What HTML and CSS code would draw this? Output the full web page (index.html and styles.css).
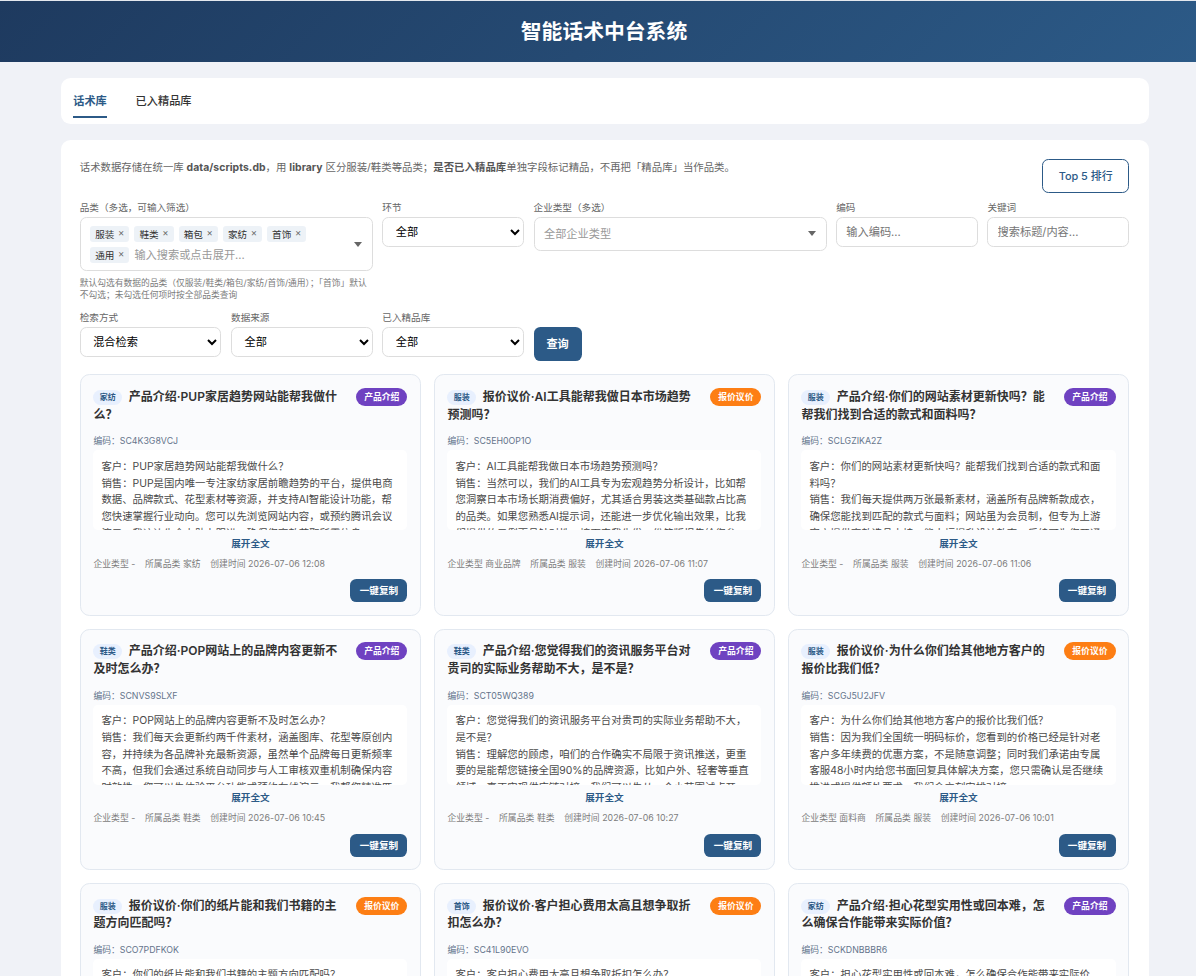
FILE: index.html
```html
<!DOCTYPE html>
<html lang="zh-CN">
<head>
<meta charset="utf-8">
<title>智能话术中台系统</title>
<link rel="stylesheet" href="styles.css">
</head>
<body>
<header class="header"><h1>智能话术中台系统</h1></header>
<main class="container">
  <nav class="tabs">
    <a class="tab active">话术库</a>
    <a class="tab">已入精品库</a>
  </nav>
  <section class="panel">
    <div class="panel-head">
      <p class="desc">话术数据存储在统一库 <strong>data/scripts.db</strong>，用 <strong>library</strong> 区分服装/鞋类等品类；<strong>是否已入精品库</strong>单独字段标记精品，不再把「精品库」当作品类。</p>
      <button class="btn-outline">Top 5 排行</button>
    </div>
    <div class="filters">
      <div class="field wide">
        <label>品类（多选，可输入筛选）</label>
        <div class="multi tall">
          <div class="chips">
            <span class="chip">服装<i>×</i></span><span class="chip">鞋类<i>×</i></span><span class="chip">箱包<i>×</i></span><span class="chip">家纺<i>×</i></span><span class="chip">首饰<i>×</i></span><span class="chip">通用<i>×</i></span><span class="ph">输入搜索或点击展开...</span>
          </div>
          <span class="caret"></span>
        </div>
        <p class="hint">默认勾选有数据的品类（仅服装/鞋类/箱包/家纺/首饰/通用）；「首饰」默认<br>不勾选；未勾选任何项时按全部品类查询</p>
      </div>
      <div class="field"><label>环节</label><select><option>全部</option></select></div>
      <div class="field wide">
        <label>企业类型（多选）</label>
        <div class="multi"><span class="ph">全部企业类型</span><span class="caret"></span></div>
      </div>
      <div class="field"><label>编码</label><input type="text" placeholder="输入编码..."></div>
      <div class="field"><label>关键词</label><input type="text" placeholder="搜索标题/内容..."></div>
      <div class="field"><label>检索方式</label><select><option>混合检索</option></select></div>
      <div class="field"><label>数据来源</label><select><option>全部</option></select></div>
      <div class="field"><label>已入精品库</label><select><option>全部</option></select></div>
      <div class="field submit"><button class="btn-query">查询</button></div>
    </div>

    <div class="cards">
      <article class="card">
        <div class="card-head"><h3><span class="tag">家纺</span>产品介绍·PUP家居趋势网站能帮我做什<br>么？</h3><span class="badge purple">产品介绍</span></div>
        <div class="code">编码：SC4K3G8VCJ</div>
        <div class="content">客户：PUP家居趋势网站能帮我做什么？<br>销售：PUP是国内唯一专注家纺家居前瞻趋势的平台，提供电商<br>数据、品牌款式、花型素材等资源，并支持AI智能设计功能，帮<br>您快速掌握行业动向。您可以先浏览网站内容，或预约腾讯会议<br>演示，我这边先全力助力跟进，确保您高效获取所需信息。</div>
        <a class="expand">展开全文</a>
        <div class="meta"><span>企业类型 -</span><span>所属品类 家纺</span><span>创建时间 2026-07-06 12:08</span></div>
        <button class="copy">一键复制</button>
      </article>
      <article class="card">
        <div class="card-head"><h3><span class="tag">服装</span>报价议价·AI工具能帮我做日本市场趋势<br>预测吗？</h3><span class="badge orange">报价议价</span></div>
        <div class="code">编码：SC5EH0OP1O</div>
        <div class="content">客户：AI工具能帮我做日本市场趋势预测吗？<br>销售：当然可以，我们的AI工具专为宏观趋势分析设计，比如帮<br>您洞察日本市场长期消费偏好，尤其适合男装这类基础款占比高<br>的品类。如果您熟悉AI提示词，还能进一步优化输出效果，比我<br>们提供的示例更具针对性。接下来我先发一份简版报告给您参</div>
        <a class="expand">展开全文</a>
        <div class="meta"><span>企业类型 商业品牌</span><span>所属品类 服装</span><span>创建时间 2026-07-06 11:07</span></div>
        <button class="copy">一键复制</button>
      </article>
      <article class="card">
        <div class="card-head"><h3><span class="tag">服装</span>产品介绍·你们的网站素材更新快吗？能<br>帮我们找到合适的款式和面料吗？</h3><span class="badge purple">产品介绍</span></div>
        <div class="code">编码：SCLGZIKA2Z</div>
        <div class="content">客户：你们的网站素材更新快吗？能帮我们找到合适的款式和面<br>料吗？<br>销售：我们每天提供两万张最新素材，涵盖所有品牌新款成衣，<br>确保您能找到匹配的款式与面料；网站虽为会员制，但专为上游<br>客户提供高效选品支持，能大幅提升设计效率。后续可为您开通</div>
        <a class="expand">展开全文</a>
        <div class="meta"><span>企业类型 -</span><span>所属品类 服装</span><span>创建时间 2026-07-06 11:06</span></div>
        <button class="copy">一键复制</button>
      </article>
      <article class="card">
        <div class="card-head"><h3><span class="tag">鞋类</span>产品介绍·POP网站上的品牌内容更新不<br>及时怎么办？</h3><span class="badge purple">产品介绍</span></div>
        <div class="code">编码：SCNVS9SLXF</div>
        <div class="content">客户：POP网站上的品牌内容更新不及时怎么办？<br>销售：我们每天会更新约两千件素材，涵盖图库、花型等原创内<br>容，并持续为各品牌补充最新资源，虽然单个品牌每日更新频率<br>不高，但我们会通过系统自动同步与人工审核双重机制确保内容<br>时效性。您可以先体验平台功能或预约在线演示，我帮您精准匹</div>
        <a class="expand">展开全文</a>
        <div class="meta"><span>企业类型 -</span><span>所属品类 鞋类</span><span>创建时间 2026-07-06 10:45</span></div>
        <button class="copy">一键复制</button>
      </article>
      <article class="card">
        <div class="card-head"><h3><span class="tag">鞋类</span>产品介绍·您觉得我们的资讯服务平台对<br>贵司的实际业务帮助不大，是不是？</h3><span class="badge purple">产品介绍</span></div>
        <div class="code">编码：SCT05WQ389</div>
        <div class="content">客户：您觉得我们的资讯服务平台对贵司的实际业务帮助不大，<br>是不是？<br>销售：理解您的顾虑，咱们的合作确实不局限于资讯推送，更重<br>要的是能帮您链接全国90%的品牌资源，比如户外、轻奢等垂直<br>领域，真正实现供应链对接。我们可以先从一个小范围试点开</div>
        <a class="expand">展开全文</a>
        <div class="meta"><span>企业类型 -</span><span>所属品类 鞋类</span><span>创建时间 2026-07-06 10:27</span></div>
        <button class="copy">一键复制</button>
      </article>
      <article class="card">
        <div class="card-head"><h3><span class="tag">服装</span>报价议价·为什么你们给其他地方客户的<br>报价比我们低？</h3><span class="badge orange">报价议价</span></div>
        <div class="code">编码：SCGJ5U2JFV</div>
        <div class="content">客户：为什么你们给其他地方客户的报价比我们低？<br>销售：因为我们全国统一明码标价，您看到的价格已经是针对老<br>客户多年续费的优惠方案，不是随意调整；同时我们承诺由专属<br>客服48小时内给您书面回复具体解决方案，您只需确认是否继续<br>推进或提供额外要求，我们会立刻安排对接。</div>
        <a class="expand">展开全文</a>
        <div class="meta"><span>企业类型 面料商</span><span>所属品类 服装</span><span>创建时间 2026-07-06 10:01</span></div>
        <button class="copy">一键复制</button>
      </article>
      <article class="card">
        <div class="card-head"><h3><span class="tag">服装</span>报价议价·你们的纸片能和我们书籍的主<br>题方向匹配吗？</h3><span class="badge orange">报价议价</span></div>
        <div class="code">编码：SCO7PDFKOK</div>
        <div class="content">客户：你们的纸片能和我们书籍的主题方向匹配吗？</div>
      </article>
      <article class="card">
        <div class="card-head"><h3><span class="tag">首饰</span>报价议价·客户担心费用太高且想争取折<br>扣怎么办？</h3><span class="badge orange">报价议价</span></div>
        <div class="code">编码：SC41L90EVO</div>
        <div class="content">客户：客户担心费用太高且想争取折扣怎么办？</div>
      </article>
      <article class="card">
        <div class="card-head"><h3><span class="tag">家纺</span>产品介绍·担心花型实用性或回本难，怎<br>么确保合作能带来实际价值？</h3><span class="badge purple">产品介绍</span></div>
        <div class="code">编码：SCKDNBBBR6</div>
        <div class="content">客户：担心花型实用性或回本难，怎么确保合作能带来实际价</div>
      </article>
    </div>
  </section>
</main>
</body>
</html>
```

FILE: styles.css
```css
* { box-sizing: border-box; margin: 0; padding: 0; }
html { height: 976px; overflow: hidden; }
body {
  height: 976px;
  overflow: hidden;
  background: #f0f2f7;
  color: #333;
  font-family: Inter, "Noto Sans CJK SC", sans-serif;
  white-space: nowrap;
}
button, input, select { font-family: inherit; }

.header {
  height: 62px;
  padding: 1px 0 0 12px;
  display: flex;
  align-items: center;
  justify-content: center;
  background: linear-gradient(135deg, #1e3a5f, #2c5a87) padding-box;
  border-top: 1px solid #e4e8ee;
}
.header h1 { font-size: 20.8px; line-height: 30px; font-weight: 700; color: #fff; }

.container { width: 1088px; margin: 16px 0 0 60.6px; }

.tabs {
  display: flex;
  gap: 28.8px;
  height: 46px;
  padding: 6.4px 12.6px;
  background: #fff;
  border-radius: 9.6px;
}
.tab {
  height: 33.6px;
  line-height: 34.6px;
  font-size: 11.2px;
  font-weight: 500;
  color: #333;
  border-bottom: 2px solid transparent;
}
.tab.active { color: #2c5a87; border-bottom-color: #2c5a87; font-weight: 600; }

.panel {
  height: 836px;
  margin-top: 16px;
  padding: 19.2px 19.5px 0 19.2px;
  background: #fff;
  border-radius: 9.6px 9.6px 0 0;
  overflow: hidden;
}
.panel-head { display: flex; justify-content: space-between; height: 41.4px; }
.desc { padding-top: 1px; font-size: 10.4px; line-height: 16.6px; color: #666; }
.desc strong { color: #555; letter-spacing: 0.05px; }
.btn-outline {
  width: 87px;
  height: 33.6px;
  padding-bottom: 1px;
  border: 1px solid #2c5a87;
  border-radius: 6.4px;
  background: #fff;
  color: #2c5a87;
  font-size: 10.9px;
  font-weight: 500;
}

.filters {
  display: grid;
  grid-template-columns: repeat(7, 1fr);
  grid-template-rows: 100.4px 55px;
  column-gap: 9.6px;
  row-gap: 9.6px;
}
.field { display: flex; flex-direction: column; min-width: 0; }
.field.wide { grid-column: span 2; }
.field label { height: 16.4px; line-height: 13px; font-size: 9.6px; color: #666; }
.field select, .field input {
  width: 100%;
  height: 30px;
  padding: 0 9.2px;
  border: 1px solid #ddd;
  border-radius: 6.4px;
  background: #fff;
  font-size: 11.2px;
  color: #000;
}
.field select { padding: 0 4px 0 8.4px; }
.field input::placeholder { color: #757575; }
.multi {
  display: flex;
  align-items: center;
  justify-content: space-between;
  height: 33.6px;
  padding: 0 9.6px 0 9.4px;
  border: 1px solid #ddd;
  border-radius: 6.4px;
  background: #fff;
}
.multi.tall { height: 55px; padding-top: 1px; }
.ph { font-size: 11.2px; color: #999; line-height: 16px; }
.chips { display: flex; flex-wrap: wrap; gap: 5px 5.1px; width: 240px; }
.chip {
  display: flex;
  align-items: center;
  gap: 3.6px;
  height: 16px;
  padding: 0 5px;
  border-radius: 3.2px;
  background: #edf2f7;
  font-size: 9.6px;
  color: #333;
}
.chip i { font-style: normal; font-size: 9.6px; line-height: 10px; margin-top: -2px; color: #666; }
.caret {
  border-left: 4px solid transparent;
  border-right: 4px solid transparent;
  border-top: 5px solid #666;
}
.hint { margin-top: 6px; font-size: 8.75px; line-height: 12px; color: #7c7c7c; }
.submit { padding-top: 16.4px; }
.btn-query {
  width: 48px;
  height: 34px;
  padding-bottom: 1px;
  border: 0;
  border-radius: 6.4px;
  background: #2c5a87;
  color: #fff;
  font-size: 11.2px;
  font-weight: 600;
}

.cards {
  display: grid;
  grid-template-columns: repeat(3, 1fr);
  grid-auto-rows: 241.4px;
  gap: 12.8px;
  margin-top: 8.8px;
}
.card {
  display: flex;
  flex-direction: column;
  padding: 12.8px 12.6px 12.4px;
  border: 1px solid #e2e8f0;
  border-radius: 9.6px;
  background: #fafbfd;
}
.card-head { display: flex; justify-content: space-between; align-items: flex-start; height: 46.3px; }
.card h3 { font-size: 12px; line-height: 17.4px; font-weight: 600; color: #333; }
.tag {
  display: inline-block;
  height: 15px;
  margin: -2px 6.6px 0 0;
  padding: 0 6.4px;
  border-radius: 8px;
  background: #e8f0fe;
  color: #2c5a87;
  font-size: 8px;
  line-height: 15px;
  font-weight: 600;
  vertical-align: 1px;
}
.badge {
  height: 18px;
  padding: 0 8px;
  border-radius: 9px;
  color: #fff;
  font-size: 8.8px;
  line-height: 17.6px;
  font-weight: 600;
}
.badge.purple { background: #6f42c1; }
.badge.orange { background: #fd7e14; }
.code { height: 16px; font-size: 8.8px; line-height: 14px; color: #64748b; }
.content {
  flex: none;
  height: 80px;
  padding: 8.6px 8px 0;
  border-radius: 4.8px;
  background: #fff;
  font-size: 10.4px;
  line-height: 16.7px;
  color: #4a4a4a;
  overflow: hidden;
}
.expand {
  align-self: center;
  margin-top: 6.1px;
  font-size: 9.6px;
  line-height: 14px;
  font-weight: 600;
  color: #2c5a87;
}
.meta {
  display: flex;
  gap: 9.6px;
  margin-top: 6.4px;
  font-size: 8.8px;
  line-height: 14px;
  letter-spacing: 0.05px;
  color: #7c7c7c;
}
.copy {
  align-self: flex-end;
  width: 57px;
  height: 23px;
  margin-top: auto;
  padding-bottom: 1px;
  border: 0;
  border-radius: 6.4px;
  background: #2c5a87;
  color: #fff;
  font-size: 9.6px;
  font-weight: 600;
}
```
